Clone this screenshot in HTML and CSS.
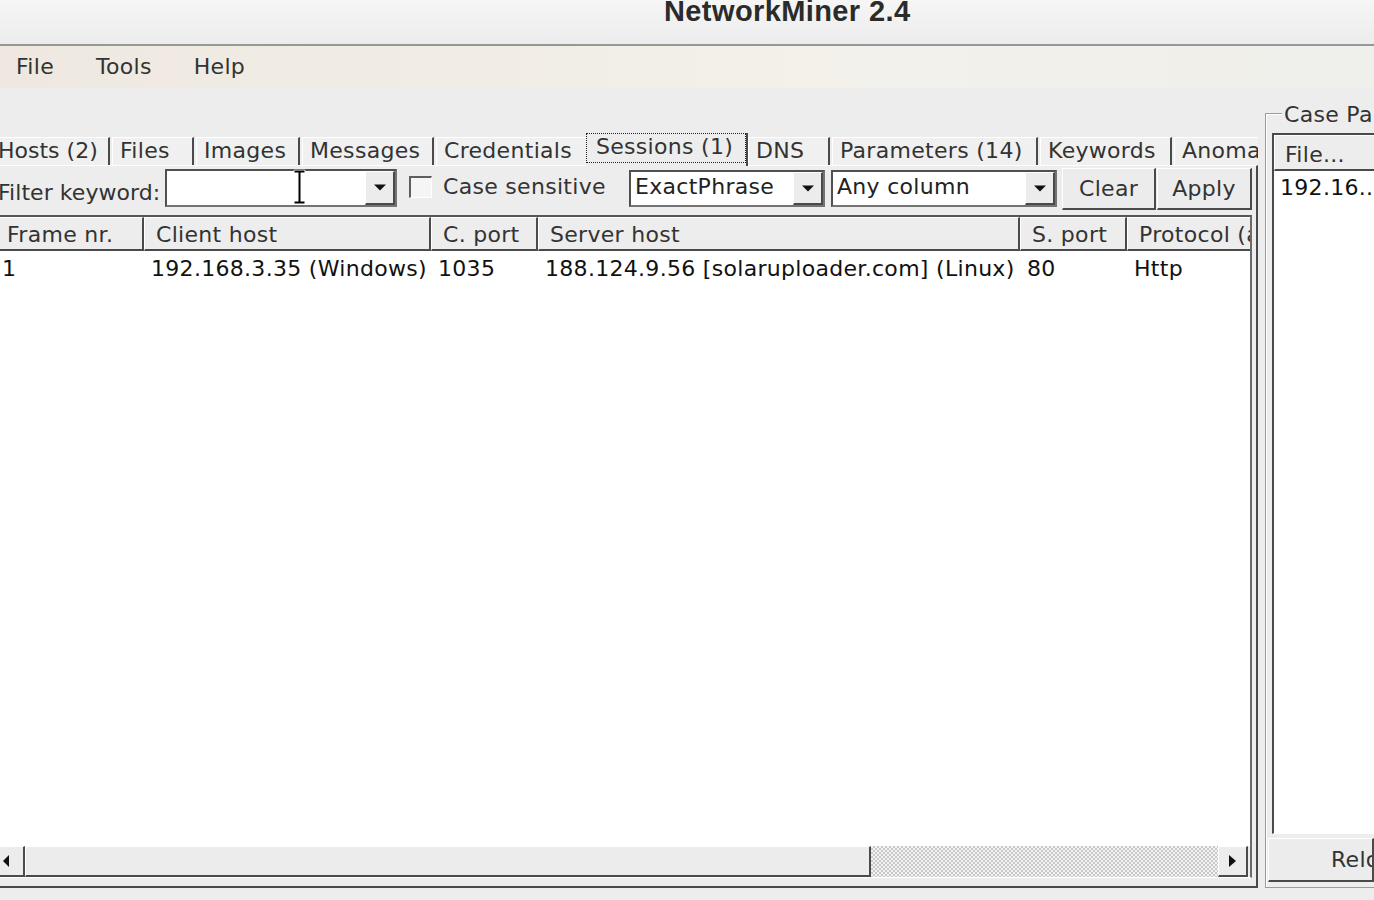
FILE: index.html
```html
<!DOCTYPE html>
<html lang="en">
<head>
<meta charset="utf-8">
<title>NetworkMiner 2.4</title>
<link rel="stylesheet" href="styles.css">
</head>
<body>
<div class="window">
  <header class="titlebar"><span class="title">NetworkMiner 2.4</span></header>
  <nav class="menubar"><span>File</span><span>Tools</span><span>Help</span></nav>
  <div class="workspace">
    <section class="tabctl">
      <div class="tabstrip">
        <div class="tab t-hosts">Hosts (2)</div>
        <div class="tab t-files">Files</div>
        <div class="tab t-images">Images</div>
        <div class="tab t-messages">Messages</div>
        <div class="tab t-cred">Credentials</div>
        <div class="tab t-sel"><span class="focus">Sessions (1)</span></div>
        <div class="tab t-dns">DNS</div>
        <div class="tab t-params">Parameters (14)</div>
        <div class="tab t-keywords">Keywords</div>
        <div class="tab t-anom">Anomalies</div>
      </div>
      <div class="tabpage">
        <div class="filterrow">
          <span class="lbl-filter">Filter keyword:</span>
          <div class="combo combo-kw">
            <span class="combo-text"></span>
            <span class="dd"><svg width="12" height="7" viewBox="0 0 12 7"><path d="M0 0.5h12L6 6.5z" fill="#111"/></svg></span>
            <svg class="ibeam" width="13" height="36" viewBox="0 0 13 36"><path d="M1.5 1.5h10v2h-4v29h4v2h-10v-2h4v-29h-4z" fill="#000" stroke="#fff" stroke-width="1.5" paint-order="stroke"/></svg>
          </div>
          <span class="check"></span>
          <span class="lbl-case">Case sensitive</span>
          <div class="combo combo-mode">
            <span class="combo-text">ExactPhrase</span>
            <span class="dd"><svg width="12" height="7" viewBox="0 0 12 7"><path d="M0 0.5h12L6 6.5z" fill="#111"/></svg></span>
          </div>
          <div class="combo combo-col">
            <span class="combo-text">Any column</span>
            <span class="dd"><svg width="12" height="7" viewBox="0 0 12 7"><path d="M0 0.5h12L6 6.5z" fill="#111"/></svg></span>
          </div>
          <button class="btn btn-clear">Clear</button>
          <button class="btn btn-apply">Apply</button>
        </div>
        <div class="listview">
          <div class="lv-clip">
            <div class="lv-grid">
              <div class="th">Frame nr.</div>
              <div class="th">Client host</div>
              <div class="th">C. port</div>
              <div class="th">Server host</div>
              <div class="th">S. port</div>
              <div class="th th-last">Protocol (application layer)</div>
              <div class="td">1</div>
              <div class="td">192.168.3.35 (Windows)</div>
              <div class="td">1035</div>
              <div class="td">188.124.9.56 [solaruploader.com] (Linux)</div>
              <div class="td">80</div>
              <div class="td">Http</div>
            </div>
          </div>
          <div class="hscroll">
            <span class="sb-btn sb-left"><svg width="6" height="12" viewBox="0 0 6 12"><path d="M6 0v12L0 6z" fill="#111"/></svg></span>
            <span class="sb-btn sb-thumb"></span>
            <span class="sb-track"></span>
            <span class="sb-btn sb-right"><svg width="7" height="12" viewBox="0 0 7 12"><path d="M0 0v12L7 6z" fill="#111"/></svg></span>
            <span class="sb-end"></span>
          </div>
        </div>
      </div>
    </section>
    <aside class="casegroup">
      <div class="group-title"><span>Case Panel</span></div>
      <div class="filelist">
        <div class="fl-header">File...</div>
        <div class="fl-row">192.16...</div>
      </div>
      <button class="btn btn-reload">Reload Case Files</button>
    </aside>
  </div>
</div>
</body>
</html>
```
FILE: styles.css
```css
* { box-sizing: border-box; }
html, body { margin: 0; padding: 0; }
body {
  width: 1374px;
  height: 900px;
  overflow: hidden;
  background: #ededed;
  font-family: "DejaVu Sans", sans-serif;
  font-size: 22px;
  letter-spacing: 0.3px;
  color: #333;
}
.window { width: 1374px; height: 900px; overflow: hidden; }

.titlebar {
  height: 46px;
  border-bottom: 2px solid #979797;
  background: linear-gradient(#f6f6f6, #ececec);
  padding-left: 664px;
  white-space: nowrap;
  overflow: hidden;
}
.title {
  display: block;
  font: bold 29px/22px "Liberation Sans", Arial, sans-serif;
  letter-spacing: 0.4px;
  color: #2b2b2b;
}

.menubar {
  height: 42px;
  display: flex;
  gap: 42px;
  padding: 8px 0 0 16px;
  line-height: 26px;
  background: linear-gradient(90deg, #eee8e0 0%, #f1ede5 35%, #f3f1ea 60%, #efefeb 100%);
  color: #333;
}

.workspace { display: flex; height: 812px; overflow: hidden; }

.tabctl { width: 1258px; flex: none; margin-top: 45px; overflow: hidden; }
.tabstrip {
  height: 32px;
  display: flex;
  align-items: flex-end;
  gap: 2px;
  position: relative;
  z-index: 1;
}
.tab {
  flex: none;
  height: 28px;
  background: #f0f0f0;
  border-top: 1px solid #fff;
  border-left: 1px solid #fff;
  border-right: 2px solid #4a4a4a;
  padding-left: 7px;
  line-height: 26px;
  white-space: nowrap;
  overflow: hidden;
  color: #333;
}
.t-hosts { width: 110px; border-left: none; padding-left: 0; text-indent: -2px; letter-spacing: 0; }
.t-files { width: 82px; }
.t-images { width: 104px; }
.t-messages { width: 132px; }
.t-cred { width: 152px; }
.t-sel {
  width: 162px;
  height: 33px;
  margin: 0 -2px -1px -4px;
  padding: 0;
  border: none;
  border-right: 2px solid #4a4a4a;
  background: #ededed;
  position: relative;
  z-index: 2;
}
.t-sel .focus {
  display: block;
  height: 30px;
  border: 1px dotted #222;
  padding-left: 9px;
  line-height: 26px;
}
.t-dns { width: 82px; }
.t-params { width: 206px; }
.t-keywords { width: 132px; }
.t-anom { width: 84px; border-right: none; }

.tabpage {
  height: 723px;
  border-top: 1px solid #fff;
  border-right: 2px solid #4a4a4a;
  border-bottom: 2px solid #4a4a4a;
  padding: 0 4px 8px 0;
  background: #ededed;
}

.filterrow {
  display: flex;
  align-items: flex-start;
  height: 42px;
  margin-top: 2px;
}
.lbl-filter {
  width: 167px;
  flex: none;
  margin: 12px 0 0 -2px;
  line-height: 26px;
  letter-spacing: 0.05px;
  white-space: nowrap;
}
.combo {
  position: relative;
  flex: none;
  display: flex;
  border: 2px solid;
  border-color: #505050 #747474 #747474 #505050;
  background: #fff;
}
.combo-kw { width: 232px; height: 38px; margin-top: 1px; }
.combo-mode { width: 196px; height: 37px; margin-top: 2px; }
.combo-col { width: 226px; height: 37px; margin: 2px 0 0 6px; }
.combo-text {
  flex: 1;
  padding: 2px 0 0 4px;
  line-height: 26px;
  color: #222;
  white-space: nowrap;
  overflow: hidden;
}
.dd {
  flex: none;
  width: 30px;
  background: #ececec;
  border-top: 1px solid #fff;
  border-left: 1px solid #fff;
  border-right: 2px solid #4a4a4a;
  border-bottom: 2px solid #4a4a4a;
  display: flex;
  align-items: center;
  justify-content: center;
}
.ibeam { position: absolute; left: 126px; top: -2px; }
.check {
  flex: none;
  width: 23px;
  height: 22px;
  margin: 8px 0 0 12px;
  border-top: 2px solid #5e5e5e;
  border-left: 2px solid #5e5e5e;
  border-right: 1px solid #fff;
  border-bottom: 1px solid #fff;
  background: #f5f5f5;
}
.lbl-case {
  flex: none;
  width: 186px;
  margin: 6px 0 0 11px;
  line-height: 26px;
  white-space: nowrap;
}

.btn {
  font: inherit;
  letter-spacing: inherit;
  line-height: 26px;
  color: #333;
  padding: 0;
  background: #ececec;
  border-top: 1px solid #fff;
  border-left: 1px solid #fff;
  border-right: 2px solid #4a4a4a;
  border-bottom: 2px solid #4a4a4a;
  border-radius: 0;
  flex: none;
}
.btn-clear { width: 94px; height: 42px; margin-left: 5px; }
.btn-apply { width: 95px; height: 42px; margin-left: 1px; }

.listview {
  width: 1252px;
  margin-top: 5px;
  border-top: 2px solid #555;
  border-right: 2px solid #6a6a6a;
  border-bottom: 1px solid #fff;
}
.lv-clip { height: 629px; overflow: hidden; background: #fff; }
.lv-grid {
  display: grid;
  grid-template-columns: 149px 287px 107px 482px 107px 123px;
  margin-left: -5px;
  width: max-content;
}
.th {
  background: #ededed;
  border-top: 1px solid #fff;
  border-left: 1px solid #fff;
  border-right: 2px solid #4a4a4a;
  border-bottom: 2px solid #4a4a4a;
  padding: 4px 0 1px 11px;
  line-height: 26px;
  white-space: nowrap;
  overflow: hidden;
  color: #333;
}
.th-last { border-right: none; }
.td {
  padding: 5px 0 0 7px;
  line-height: 26px;
  white-space: nowrap;
  color: #111;
}

.hscroll { display: flex; height: 31px; background: #ededed; }
.sb-btn {
  flex: none;
  background: #ececec;
  border-top: 1px solid #fff;
  border-left: 1px solid #fff;
  border-right: 2px solid #4a4a4a;
  border-bottom: 2px solid #4a4a4a;
  display: flex;
  align-items: center;
  justify-content: center;
}
.sb-left { width: 25px; border-left: none; justify-content: flex-start; padding-left: 3px; }
.sb-thumb { width: 846px; }
.sb-track {
  flex: 1;
  background-color: #efefef;
  background-image: repeating-conic-gradient(#c9c9c9 0 25%, #f3f3f3 0 50%);
  background-size: 4px 4px;
}
.sb-right { width: 30px; }
.sb-end { width: 2px; flex: none; }

.casegroup {
  flex: none;
  width: 109px;
  height: 775px;
  margin: 25px 0 0 7px;
  border-top: 1px solid #9c9c9c;
  border-left: 1px solid #9c9c9c;
  border-bottom: 1px solid #9c9c9c;
  box-shadow: inset 1px 1px 0 #fff;
  display: flex;
  flex-direction: column;
}
.group-title {
  margin-top: -12px;
  height: 26px;
  padding-left: 16px;
  line-height: 26px;
  white-space: nowrap;
  overflow: hidden;
}
.group-title span { background: #ededed; padding: 0 2px; }
.filelist {
  flex: 1;
  margin: 5px 0 0 6px;
  border-top: 2px solid #4a4a4a;
  border-left: 2px solid #4a4a4a;
  border-bottom: 1px solid #fff;
  background: #fff;
  overflow: hidden;
}
.fl-header {
  background: #ededed;
  border-top: 1px solid #fff;
  border-left: 1px solid #fff;
  border-bottom: 2px solid #4a4a4a;
  padding: 6px 0 1px 10px;
  line-height: 26px;
  white-space: nowrap;
  overflow: hidden;
}
.fl-row {
  padding: 4px 0 0 6px;
  line-height: 26px;
  white-space: nowrap;
  overflow: hidden;
  color: #111;
}
.btn-reload {
  height: 44px;
  margin: 4px 0 5px 2px;
  text-align: left;
  padding-left: 62px;
  white-space: nowrap;
  overflow: hidden;
}
```
